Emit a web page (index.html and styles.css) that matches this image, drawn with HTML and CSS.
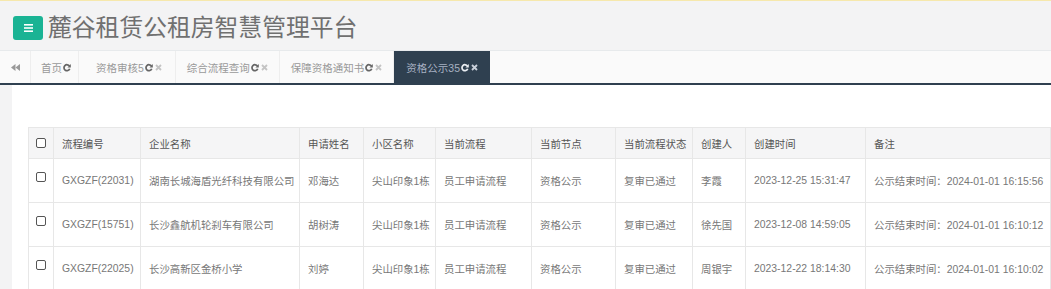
FILE: index.html
```html
<!DOCTYPE html>
<html>
<head>
    <title>麓谷租赁公租房智慧管理平台</title>
    <link rel="stylesheet" href="styles.css">
</head>
<body>
    <div class="topbar">
        <span class="menu-btn">
            <svg width="9" height="8" viewBox="0 0 9 8"><rect y="0" width="9" height="1.6" fill="#fff"/><rect y="3.2" width="9" height="1.6" fill="#fff"/><rect y="6.4" width="9" height="1.6" fill="#fff"/></svg>
        </span>
        <h1 class="site-title">麓谷租赁公租房智慧管理平台</h1>
    </div>

    <div class="tabbar">
        <a class="tab-back" href="#">
            <svg width="9" height="7" viewBox="0 0 9 7"><polygon points="4.5,0 4.5,7 0,3.5" fill="#999"/><polygon points="9,0 9,7 4.5,3.5" fill="#999"/></svg>
        </a>
        <div class="tabs">
            <a class="tab first" href="#">首页<svg class="ico-refresh" width="8" height="9" viewBox="0 0 10 10"><path d="M8.1 3.3A3.7 3.7 0 1 0 8.4 6.6" fill="none" stroke="currentColor" stroke-width="2.2"/><polygon points="9.8,0.6 9.8,5 5.6,5" fill="currentColor"/></svg></a>
            <a class="tab wide" href="#">资格审核5<svg class="ico-refresh" width="8" height="9" viewBox="0 0 10 10"><path d="M8.1 3.3A3.7 3.7 0 1 0 8.4 6.6" fill="none" stroke="currentColor" stroke-width="2.2"/><polygon points="9.8,0.6 9.8,5 5.6,5" fill="currentColor"/></svg><svg class="ico-close" width="7" height="7" viewBox="0 0 7 7"><path d="M1 1L6 6M6 1L1 6" stroke="currentColor" stroke-width="1.8"/></svg></a>
            <a class="tab" href="#">综合流程查询<svg class="ico-refresh" width="8" height="9" viewBox="0 0 10 10"><path d="M8.1 3.3A3.7 3.7 0 1 0 8.4 6.6" fill="none" stroke="currentColor" stroke-width="2.2"/><polygon points="9.8,0.6 9.8,5 5.6,5" fill="currentColor"/></svg><svg class="ico-close" width="7" height="7" viewBox="0 0 7 7"><path d="M1 1L6 6M6 1L1 6" stroke="currentColor" stroke-width="1.8"/></svg></a>
            <a class="tab" href="#">保障资格通知书<svg class="ico-refresh" width="8" height="9" viewBox="0 0 10 10"><path d="M8.1 3.3A3.7 3.7 0 1 0 8.4 6.6" fill="none" stroke="currentColor" stroke-width="2.2"/><polygon points="9.8,0.6 9.8,5 5.6,5" fill="currentColor"/></svg><svg class="ico-close" width="7" height="7" viewBox="0 0 7 7"><path d="M1 1L6 6M6 1L1 6" stroke="currentColor" stroke-width="1.8"/></svg></a>
            <a class="tab active" href="#">资格公示35<svg class="ico-refresh" width="8" height="9" viewBox="0 0 10 10"><path d="M8.1 3.3A3.7 3.7 0 1 0 8.4 6.6" fill="none" stroke="currentColor" stroke-width="2.2"/><polygon points="9.8,0.6 9.8,5 5.6,5" fill="currentColor"/></svg><svg class="ico-close" width="7" height="7" viewBox="0 0 7 7"><path d="M1 1L6 6M6 1L1 6" stroke="currentColor" stroke-width="1.8"/></svg></a>
        </div>
    </div>

    <div class="main">
        <div class="side"></div>
        <div class="content">
            <table class="grid">
                <colgroup>
                    <col style="width:25px"><col style="width:87px"><col style="width:159px"><col style="width:64px">
                    <col style="width:72px"><col style="width:96px"><col style="width:84px"><col style="width:77px">
                    <col style="width:53px"><col style="width:120px"><col style="width:185px">
                </colgroup>
                <thead>
                    <tr>
                        <th class="check"><span class="box"></span></th>
                        <th>流程编号</th>
                        <th>企业名称</th>
                        <th>申请姓名</th>
                        <th>小区名称</th>
                        <th>当前流程</th>
                        <th>当前节点</th>
                        <th>当前流程状态</th>
                        <th>创建人</th>
                        <th>创建时间</th>
                        <th>备注</th>
                    </tr>
                </thead>
                <tbody>
                    <tr>
                        <td class="check"><span class="box"></span></td>
                        <td>GXGZF(22031)</td>
                        <td>湖南长城海盾光纤科技有限公司</td>
                        <td>邓海达</td>
                        <td>尖山印象1栋</td>
                        <td>员工申请流程</td>
                        <td>资格公示</td>
                        <td>复审已通过</td>
                        <td>李霞</td>
                        <td>2023-12-25 15:31:47</td>
                        <td>公示结束时间：2024-01-01 16:15:56</td>
                    </tr>
                    <tr>
                        <td class="check"><span class="box"></span></td>
                        <td>GXGZF(15751)</td>
                        <td>长沙鑫航机轮刹车有限公司</td>
                        <td>胡树涛</td>
                        <td>尖山印象1栋</td>
                        <td>员工申请流程</td>
                        <td>资格公示</td>
                        <td>复审已通过</td>
                        <td>徐先国</td>
                        <td>2023-12-08 14:59:05</td>
                        <td>公示结束时间：2024-01-01 16:10:12</td>
                    </tr>
                    <tr>
                        <td class="check"><span class="box"></span></td>
                        <td>GXGZF(22025)</td>
                        <td>长沙高新区金桥小学</td>
                        <td>刘婷</td>
                        <td>尖山印象1栋</td>
                        <td>员工申请流程</td>
                        <td>资格公示</td>
                        <td>复审已通过</td>
                        <td>周银宇</td>
                        <td>2023-12-22 18:14:30</td>
                        <td>公示结束时间：2024-01-01 16:10:02</td>
                    </tr>
                </tbody>
            </table>
        </div>
    </div>
</body>
</html>
```

FILE: styles.css
```css
body {
    font-family: "Liberation Sans", "Noto Sans CJK SC", sans-serif;
    margin: 0;
    padding: 0;
    height: 289px;
    overflow: hidden;
    background-color: #fff;
}

.topbar {
    height: 49px;
    background-color: #f3f3f4;
    border-top: 1px solid #f6e8ac;
    border-bottom: 1px solid #e7eaec;
    display: flex;
    align-items: center;
    padding-left: 13px;
}

.menu-btn {
    width: 30px;
    height: 24px;
    margin-top: 4px;
    background-color: #1ab394;
    border-radius: 3px;
    display: flex;
    align-items: center;
    justify-content: center;
}

.site-title {
    margin: 0 0 0 5px;
    font-size: 23.8px;
    font-weight: normal;
    color: #707070;
    line-height: 1;
    margin-top: 4px;
}

.tabbar {
    height: 32px;
    background-color: #fafafa;
    border-bottom: 2px solid #2f4050;
    display: flex;
}

.tab-back {
    width: 31px;
    display: flex;
    align-items: center;
    justify-content: center;
    border-right: 1px solid #eeeeee;
    box-sizing: border-box;
}

.tabs {
    display: flex;
}

.tab {
    display: flex;
    align-items: center;
    padding: 0 11px;
    font-size: 10.5px;
    color: #999;
    text-decoration: none;
    border-right: 1px solid #eeeeee;
}

.tab.first {
    padding: 0 7px 0 10px;
}

.tab.wide {
    padding: 0 13px 0 17px;
}

.tab .ico-refresh {
    color: #666;
    margin-left: 1px;
}

.tab .ico-close {
    color: #c4c4c4;
    margin-left: 2px;
}

.tab.active {
    background-color: #2f4050;
    color: #a7b1c2;
    border-right: none;
    padding: 0 12px;
}

.tab.active .ico-refresh {
    color: #e8ecf1;
}

.tab.active .ico-close {
    color: #c9d0da;
}

.main {
    display: flex;
}

.side {
    width: 13px;
    height: 210px;
    background-color: #f3f3f4;
}

.content {
    flex: 1;
    padding: 42px 0 0 16px;
}

.grid {
    table-layout: fixed;
    width: 1022px;
    border-collapse: collapse;
    font-size: 10.4px;
    color: #777;
}

.grid th,
.grid td {
    border: 1px solid #e7e7e7;
    padding: 0 8px;
    text-align: left;
    white-space: nowrap;
    overflow: hidden;
}

.grid th {
    height: 30px;
    background-color: #f5f5f6;
    font-weight: normal;
    color: #555;
}

.grid td {
    height: 43px;
    vertical-align: middle;
}

.grid .check {
    padding: 0;
    text-align: center;
}

.box {
    display: inline-block;
    width: 8px;
    height: 8px;
    border: 1px solid #555;
    border-radius: 2px;
    background-color: #fff;
    vertical-align: middle;
}

.grid td.check .box {
    margin-top: -9px;
}

.grid th.check .box {
    margin-top: -1px;
}
```
